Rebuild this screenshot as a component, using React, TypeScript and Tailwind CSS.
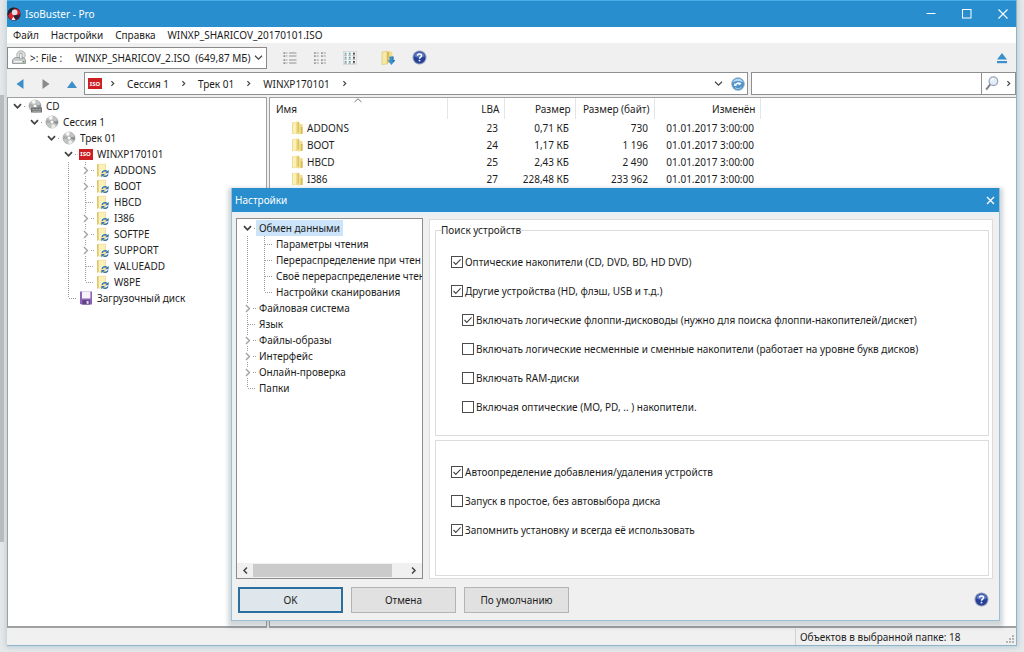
import React, { useState } from 'react';
import clsx from 'clsx';

type Guide = 'blank' | 'line' | 'tee' | 'end' | 'open' | 'closed';
type TreeIcon = 'drive' | 'disc' | 'iso' | 'folder' | 'floppy';

interface TreeRow {
  label: string;
  guides: Guide[];
  icon?: TreeIcon;
}

interface FileRow {
  name: string;
  lba: string;
  size: string;
  bytes: string;
  modified: string;
}

interface Option {
  id: string;
  label: string;
  nested?: boolean;
}

const discTree: TreeRow[] = [
  { label: 'CD', guides: ['open'], icon: 'drive' },
  { label: 'Сессия 1', guides: ['blank', 'open'], icon: 'disc' },
  { label: 'Трек 01', guides: ['blank', 'blank', 'open'], icon: 'disc' },
  { label: 'WINXP170101', guides: ['blank', 'blank', 'blank', 'open'], icon: 'iso' },
  { label: 'ADDONS', guides: ['blank', 'blank', 'blank', 'line', 'closed'], icon: 'folder' },
  { label: 'BOOT', guides: ['blank', 'blank', 'blank', 'line', 'closed'], icon: 'folder' },
  { label: 'HBCD', guides: ['blank', 'blank', 'blank', 'line', 'tee'], icon: 'folder' },
  { label: 'I386', guides: ['blank', 'blank', 'blank', 'line', 'closed'], icon: 'folder' },
  { label: 'SOFTPE', guides: ['blank', 'blank', 'blank', 'line', 'closed'], icon: 'folder' },
  { label: 'SUPPORT', guides: ['blank', 'blank', 'blank', 'line', 'closed'], icon: 'folder' },
  { label: 'VALUEADD', guides: ['blank', 'blank', 'blank', 'line', 'tee'], icon: 'folder' },
  { label: 'W8PE', guides: ['blank', 'blank', 'blank', 'line', 'end'], icon: 'folder' },
  { label: 'Загрузочный диск', guides: ['blank', 'blank', 'blank', 'end'], icon: 'floppy' },
];

const settingsTree: TreeRow[] = [
  { label: 'Обмен данными', guides: ['open'] },
  { label: 'Параметры чтения', guides: ['line', 'tee'] },
  { label: 'Перераспределение при чтен', guides: ['line', 'tee'] },
  { label: 'Своё перераспределение чтен', guides: ['line', 'tee'] },
  { label: 'Настройки сканирования', guides: ['line', 'end'] },
  { label: 'Файловая система', guides: ['closed'] },
  { label: 'Язык', guides: ['tee'] },
  { label: 'Файлы-образы', guides: ['closed'] },
  { label: 'Интерфейс', guides: ['closed'] },
  { label: 'Онлайн-проверка', guides: ['closed'] },
  { label: 'Папки', guides: ['end'] },
];

const files: FileRow[] = [
  { name: 'ADDONS', lba: '23', size: '0,71 КБ', bytes: '730', modified: '01.01.2017 3:00:00' },
  { name: 'BOOT', lba: '24', size: '1,17 КБ', bytes: '1 196', modified: '01.01.2017 3:00:00' },
  { name: 'HBCD', lba: '25', size: '2,43 КБ', bytes: '2 490', modified: '01.01.2017 3:00:00' },
  { name: 'I386', lba: '27', size: '228,48 КБ', bytes: '233 962', modified: '01.01.2017 3:00:00' },
];

const deviceOptions: Option[] = [
  { id: 'optical', label: 'Оптические накопители (CD, DVD, BD, HD DVD)' },
  { id: 'other', label: 'Другие устройства (HD, флэш, USB и т.д.)' },
  { id: 'floppy', label: 'Включать логические флоппи-дисководы (нужно для поиска флоппи-накопителей/дискет)', nested: true },
  { id: 'logical', label: 'Включать логические несменные и сменные накопители (работает на уровне букв дисков)', nested: true },
  { id: 'ram', label: 'Включать RAM-диски', nested: true },
  { id: 'mo', label: 'Включая оптические (MO, PD, .. ) накопители.', nested: true },
];

const startOptions: Option[] = [
  { id: 'autodetect', label: 'Автоопределение добавления/удаления устройств' },
  { id: 'idle', label: 'Запуск в простое, без автовыбора диска' },
  { id: 'remember', label: 'Запомнить установку и всегда её использовать' },
];

/* ---------- icons ---------- */

const AppIcon = () => (
  <svg width="14" height="14" viewBox="0 0 14 14">
    <circle cx="7" cy="7" r="6.6" fill="#5a1520" />
    <path d="M1 9C0 4 3 0.5 7 0.6L6 5Z" fill="#1d2430" />
    <path d="M1.2 8.5C2.5 5.5 4.5 4.5 7 5L6.2 12.6C3.5 12.6 1.6 11 1.2 8.5Z" fill="#d9252c" />
    <path d="M7 2.4C10 1.2 13 3.5 13.3 6.6L10 9Z" fill="#e2222b" />
    <circle cx="7.6" cy="5.4" r="2.8" fill="#dfe0e8" />
    <path d="M7.6 8.2H11.6L10.6 11.8L8 11Z" fill="#20263a" />
    <path d="M4.4 13L6.4 9.4L8.6 13Z" fill="#f3f3f3" />
  </svg>
);

const DriveIcon = () => (
  <svg width="16" height="16" viewBox="0 0 16 16">
    <circle cx="10" cy="5" r="4.2" fill="#e2e4e4" stroke="#a3a7a8" strokeWidth="0.9" />
    <path d="M1.5 9.8L4 7.6H12.6L14.5 9.8V13.5H1.5Z" fill="#c9cbcb" stroke="#8a8d8e" strokeWidth="0.8" />
    <rect x="8.8" y="3.2" width="2.2" height="5.6" fill="#fff" stroke="#8a8d8e" strokeWidth="0.7" />
    <path d="M3 11.7H11" stroke="#f6f6f6" strokeWidth="1.3" />
    <rect x="11.8" y="11" width="1.6" height="1.4" fill="#5b9a61" />
  </svg>
);

const DiscIcon = ({ drive }: { drive?: boolean }) => (
  <svg width="14" height="14" viewBox="0 0 14 14">
    <circle cx="7" cy="7" r="6" fill="#c3c5c5" stroke="#9c9f9f" strokeWidth="0.7" />
    <path d="M7 7L3.2 2.3A6 6 0 0 1 7.6 1Z" fill="#f7f7f7" />
    <path d="M7 7L10.8 11.7A6 6 0 0 1 6.4 13Z" fill="#eee" />
    <path d="M7 7L12.9 5.6A6 6 0 0 1 12.4 9.6Z" fill="#8e9292" />
    <path d="M7 7L1.1 8.4A6 6 0 0 1 1.6 4.4Z" fill="#a9acac" />
    <circle cx="7" cy="7" r="2.1" fill="#e5e6e6" stroke="#888" strokeWidth="0.5" />
    <circle cx="7" cy="7" r="0.9" fill="#fff" />
    {drive && (
      <>
        <rect x="3" y="8.5" width="11" height="5" fill="#6d6f6f" />
        <path d="M4.5 10.4H6.6M7.6 10.4H9.6M10.6 10.4H12.8M4.5 12.2H12.8" stroke="#c4c4c4" strokeWidth="0.8" />
      </>
    )}
  </svg>
);

const IsoIcon = () => (
  <span className="flex h-[11px] w-[14px] items-center justify-center bg-[#cc1f24] text-[6px] leading-none font-bold text-white">
    ISO
  </span>
);

const SyncFolderIcon = () => (
  <svg width="15" height="15" viewBox="0 0 15 15">
    <path d="M2 1.6L3.4 0.8H11V13.4H2Z" fill="#f3e19a" />
    <path d="M2 1.6L3.6 1V13L2 13.8Z" fill="#dfc565" />
    <path d="M3.8 1.6H9.8V7L5 12.6H3.8Z" fill="#faf0bd" />
    <path d="M7 9.9C7.6 7.9 10.2 7.2 11.8 8.4" stroke="#2b70b5" strokeWidth="1.4" fill="none" />
    <path d="M13.6 6.8V10.2H10.2Z" fill="#2b70b5" />
    <path d="M13 11.4C12.4 13.3 9.8 13.9 8.2 12.7" stroke="#2b70b5" strokeWidth="1.4" fill="none" />
    <path d="M6.4 14.3V10.9H9.8Z" fill="#2b70b5" />
  </svg>
);

const FloppyIcon = () => (
  <svg width="14" height="14" viewBox="0 0 14 14">
    <path d="M1 0.5H13V13.5H2.2L1 12.2Z" fill="#8c63b5" />
    <rect x="3" y="0.5" width="8.4" height="7" fill="#f6f3fa" />
    <rect x="3.4" y="9.2" width="7.4" height="4.3" fill="#5f4286" />
    <rect x="7.6" y="10" width="2" height="2.8" fill="#e6ddf1" />
  </svg>
);

const FolderIcon = () => (
  <svg width="13" height="14" viewBox="0 0 13 14">
    <path d="M1 1.2L7.6 0.6V12.8L1 13.2Z" fill="#f0dd8c" />
    <path d="M2 1.8L5 1.2V12.4L2 12.8Z" fill="#faf0bc" />
    <path d="M6.6 1.4L8.4 1V10.6L6.6 12.8Z" fill="#dcc25e" />
    <path d="M8.2 3.2L11.6 2.8V12.8L6.6 13.6L8.2 11.4Z" fill="#f0dc8c" />
    <path d="M9.8 6H11.6V12.8L9.8 13.1Z" fill="#d8bc57" />
  </svg>
);

const ExtractIcon = () => (
  <svg width="15" height="16" viewBox="0 0 15 16">
    <path d="M1 2L6 1V14L1 14.5Z" fill="#f7e9a6" stroke="#d9c167" strokeWidth="0.6" />
    <path d="M6 2L8.6 1.2V12L6 14Z" fill="#d8bb53" />
    <path d="M8.6 1.8H11.4V13H7Z" fill="#f0dc8c" />
    <path d="M8.4 6.5H12V10.2H14.3L10.4 15L6.6 10.2H8.4Z" fill="#3a8fd0" />
    <path d="M11.4 6.5H12.6V10.2H14.3L12 12.6Z" fill="#23699f" />
  </svg>
);

const HelpIcon = () => (
  <svg width="15" height="15" viewBox="0 0 15 15">
    <circle cx="7.5" cy="7.5" r="7" fill="#8f9ab8" />
    <circle cx="7.5" cy="7.5" r="5.9" fill="#263f97" />
    <path d="M2.2 6.2A5.5 5.5 0 0 1 12.8 6.2C10 8 5 8 2.2 6.2Z" fill="#5d7ccb" />
    <path d="M5.5 5.8C5.5 3.2 9.6 3.3 9.5 5.7C9.4 7.1 7.6 7.1 7.5 8.8" stroke="#fff" strokeWidth="1.5" fill="none" />
    <rect x="6.7" y="9.8" width="1.6" height="1.6" fill="#fff" />
  </svg>
);

const RefreshIcon = () => (
  <svg width="14" height="14" viewBox="0 0 14 14">
    <circle cx="7" cy="7" r="6.3" fill="#4e92c9" stroke="#8cabc4" strokeWidth="0.8" />
    <path d="M1.8 5.6A5.4 5.4 0 0 1 12.2 5.6C9 3.6 5 3.6 1.8 5.6Z" fill="#b5daf2" />
    <path d="M3.2 6V9H6.2L5.1 7.9C6.3 6.9 7.6 7.2 8.2 8.2L10.6 6.8C9.2 4.8 5.9 4.7 4.3 7Z" fill="#f3f9fd" />
    <path d="M4 10.6C6 12.2 9 12 10.4 10" stroke="#9fd4f0" strokeWidth="1" fill="none" />
  </svg>
);

const SearchIcon = () => (
  <svg width="14" height="15" viewBox="0 0 14 15">
    <circle cx="8.4" cy="5.2" r="4.3" fill="#e4edf6" stroke="#9aa6bf" strokeWidth="1.3" />
    <path d="M6.2 4.6A2.6 2.6 0 0 1 8.8 2.6" stroke="#fff" strokeWidth="1.1" fill="none" />
    <path d="M5.2 8.4L1.2 13.6" stroke="#7f7d88" strokeWidth="1.9" />
  </svg>
);

const Arrow = ({ dir }: { dir: 'left' | 'right' | 'up' }) => (
  <svg width="10" height="12" viewBox="0 0 10 12">
    {dir === 'left' && <path d="M8.5 1V11L1.5 6Z" fill="#3d8fcb" />}
    {dir === 'right' && <path d="M1.5 1V11L8.5 6Z" fill="#8b8b8b" />}
    {dir === 'up' && <path d="M0 10H10L5 3Z" fill="#3d8fcb" />}
  </svg>
);

const Chevron = ({ dir, className }: { dir: 'left' | 'right' | 'down'; className?: string }) => (
  <svg width="9" height="9" viewBox="0 0 9 9" fill="none" stroke="currentColor" className={className}>
    {dir === 'left' && <path d="M6 1.5L3 4.5L6 7.5" strokeWidth="1.5" />}
    {dir === 'right' && <path d="M3.4 2.2L5.7 4.5L3.4 6.8" strokeWidth="1.2" />}
    {dir === 'down' && <path d="M1 2.8L4.5 6.2L8 2.8" strokeWidth="1.2" />}
  </svg>
);

const ListViewIcon = ({ columns }: { columns: 1 | 2 | 3 }) => (
  <svg width="14" height="14" viewBox="0 0 14 14">
    {columns === 1 &&
      [2, 5, 9, 12].map((y) => (
        <g key={y} fill="#8f9296">
          <rect x="0.5" y={y - 0.8} width="1.8" height="1.8" />
          <rect x="3" y={y - 0.8} width="1.5" height="1.4" fill="#bbb" />
          <rect x="6" y={y - 0.5} width="7.5" height="1" />
        </g>
      ))}
    {columns === 2 &&
      [2, 5, 9, 12].map((y) => (
        <g key={y} fill="#9a9da1">
          <rect x="1" y={y - 0.8} width="1.8" height="1.8" />
          <rect x="3.6" y={y - 0.5} width="2.2" height="1" />
          <rect x="8" y={y - 0.8} width="1.8" height="1.8" />
          <rect x="10.6" y={y - 0.5} width="2.4" height="1" />
        </g>
      ))}
    {columns === 3 && (
      <>
        <rect x="0.5" y="0.5" width="13" height="13" fill="#f6f8f8" stroke="#c9cccc" strokeWidth="0.6" />
        {[2.5, 6.5, 10.7].map((y) =>
          [1.6, 5.8, 10].map((x) => (
            <g key={`${x}-${y}`}>
              <rect x={x} y={y - 0.8} width="1.9" height="1.9" fill={x > 9 ? '#444' : '#6fa3a8'} />
              <rect x={x - 0.6} y={y + 1.5} width="3" height="0.7" fill="#aaa" />
            </g>
          ))
        )}
      </>
    )}
  </svg>
);

const TreeIconView = ({ icon }: { icon: TreeIcon }) => {
  switch (icon) {
    case 'drive':
      return <DiscIcon drive />;
    case 'disc':
      return <DiscIcon />;
    case 'iso':
      return <IsoIcon />;
    case 'folder':
      return <SyncFolderIcon />;
    default:
      return <FloppyIcon />;
  }
};

/* ---------- tree ---------- */

const GuideCell = ({ kind }: { kind: Guide }) => (
  <svg width="17" height="16" viewBox="0 0 17 16" className="shrink-0" fill="none">
    <g stroke="#9a9a9a" strokeDasharray="1 1">
      {(kind === 'line' || kind === 'tee') && <path d="M8.5 0V16" />}
      {kind === 'end' && <path d="M8.5 0V8" />}
      {(kind === 'tee' || kind === 'end') && <path d="M9 8.5H17" />}
      {kind === 'closed' && <path d="M8.5 0V3M8.5 14V16M14 8.5H17" />}
      {kind === 'open' && <path d="M15 8.5H17" />}
    </g>
    {kind === 'open' && <path d="M5 6.2L8.5 9.8L12 6.2" stroke="#404040" strokeWidth="1.7" />}
    {kind === 'closed' && <path d="M7 5L10.4 8.5L7 12" stroke="#a3a3a3" strokeWidth="1.4" />}
  </svg>
);

const Tree = ({ rows, selected }: { rows: TreeRow[]; selected?: string }) => (
  <ul>
    {rows.map((row) => (
      <li key={row.label} className="flex h-4 items-center whitespace-nowrap">
        {row.guides.map((kind, i) => (
          <GuideCell key={i} kind={kind} />
        ))}
        {row.icon && (
          <span className="flex w-[17px] shrink-0 justify-center">
            <TreeIconView icon={row.icon} />
          </span>
        )}
        <span className={clsx('px-[3px] leading-4', row.label === selected && 'bg-[#cce4f9]')}>{row.label}</span>
      </li>
    ))}
  </ul>
);

/* ---------- main window ---------- */

const TitleBar = () => (
  <header className="flex h-[27px] items-center border-t border-[#4bb0ea] bg-[#288ecd] pr-[7px] text-white">
    <AppIcon />
    <h1 className="ml-1 flex-1">IsoBuster - Pro</h1>
    <div className="flex items-center gap-6">
      <button aria-label="Свернуть" className="flex size-3 items-center justify-center">
        <svg width="10" height="10" viewBox="0 0 10 10"><path d="M0.5 4.5H9.5" stroke="#fff" /></svg>
      </button>
      <button aria-label="Развернуть" className="flex size-3 items-center justify-center">
        <svg width="10" height="10" viewBox="0 0 10 10"><rect x="0.5" y="0.5" width="8.5" height="8.5" fill="none" stroke="#fff" /></svg>
      </button>
      <button aria-label="Закрыть" className="flex size-3 items-center justify-center">
        <svg width="10" height="10" viewBox="0 0 10 10"><path d="M0.5 0.5L9.5 9.5M9.5 0.5L0.5 9.5" stroke="#fff" strokeWidth="1.1" /></svg>
      </button>
    </div>
  </header>
);

const MenuBar = () => (
  <nav className="flex h-4 items-center gap-3 bg-white px-1.5">
    <button>Файл</button>
    <button>Настройки</button>
    <button>Справка</button>
    <button>WINXP_SHARICOV_20170101.ISO</button>
  </nav>
);

const Toolbar = () => (
  <div className="flex h-[29px] items-center pr-2">
    <div className="relative flex h-[22px] w-[260px] items-center border border-[#8a8a8a] bg-white pl-[3px]">
      <DriveIcon />
      <select aria-label="Устройство" className="ml-[3px] h-5 w-[222px] appearance-none overflow-hidden outline-none">
        <option>{'>: File :\u00a0\u00a0\u00a0\u00a0 WINXP_SHARICOV_2.ISO\u00a0 (649,87 МБ)'}</option>
      </select>
      <Chevron dir="down" className="pointer-events-none absolute right-[3px] text-[#444]" />
    </div>
    <div className="ml-4 flex items-center gap-4">
      <button aria-label="Таблица"><ListViewIcon columns={1} /></button>
      <button aria-label="Список"><ListViewIcon columns={2} /></button>
      <button aria-label="Значки"><ListViewIcon columns={3} /></button>
    </div>
    <div className="ml-6 flex items-center gap-4">
      <button aria-label="Извлечь файлы"><ExtractIcon /></button>
      <button aria-label="Помощь"><HelpIcon /></button>
    </div>
    <button aria-label="Извлечь диск" className="ml-auto">
      <svg width="12" height="12" viewBox="0 0 12 12" fill="#3d8fcb">
        <path d="M1 7.6H11L6 1Z" />
        <rect x="1" y="9" width="10" height="2.2" />
      </svg>
    </button>
  </div>
);

const Crumb = ({ children }: { children: React.ReactNode }) => (
  <>
    <button>{children}</button>
    <Chevron dir="right" className="text-[#444]" />
  </>
);

const AddressBar = () => (
  <div className="flex h-[23px]">
    <div className="flex w-[77px] items-center gap-4 pl-2">
      <button aria-label="Назад"><Arrow dir="left" /></button>
      <button aria-label="Вперёд"><Arrow dir="right" /></button>
      <button aria-label="Вверх"><Arrow dir="up" /></button>
    </div>
    <div className="flex flex-1 items-center gap-2.5 border border-[#8f8f8f] bg-white pr-0.5 pl-[3px]">
      <div className="flex items-center gap-1.5">
        <IsoIcon />
        <Chevron dir="right" className="text-[#444]" />
      </div>
      <Crumb>Сессия 1</Crumb>
      <Crumb>Трек 01</Crumb>
      <Crumb>WINXP170101</Crumb>
      <div className="ml-auto flex items-center gap-2">
        <button aria-label="История"><Chevron dir="down" className="text-[#444]" /></button>
        <button aria-label="Обновить"><RefreshIcon /></button>
      </div>
    </div>
    <div className="ml-[3px] flex w-[265px] border border-[#8f8f8f] bg-white">
      <input type="text" aria-label="Поиск" className="min-w-0 flex-1 px-1 outline-none" />
      <button aria-label="Найти" className="flex w-[34px] items-center justify-between border-l border-[#8f8f8f] pr-0.5 pl-[3px]">
        <SearchIcon />
        <Chevron dir="right" className="text-[#444]" />
      </button>
    </div>
  </div>
);

const headCell = 'h-[21px] border-r border-[#e2e6ea] pr-1 font-normal';

const FileTable = () => (
  <table className="w-[490px] table-fixed border-collapse text-right whitespace-nowrap">
    <colgroup>
      <col className="w-[177px]" />
      <col className="w-[57px]" />
      <col className="w-[71px]" />
      <col className="w-[79px]" />
      <col className="w-[106px]" />
    </colgroup>
    <thead>
      <tr>
        <th className={clsx(headCell, 'relative pl-1.5 text-left')}>
          Имя
          <svg width="8" height="5" viewBox="0 0 8 5" className="absolute top-0 left-1/2 -ml-1" fill="none">
            <path d="M0.5 4L4 0.8L7.5 4" stroke="#777" />
          </svg>
        </th>
        <th className={headCell}>LBA</th>
        <th className={headCell}>Размер</th>
        <th className={headCell}>Размер (байт)</th>
        <th className={headCell}>Изменён</th>
      </tr>
    </thead>
    <tbody>
      {files.map((file) => (
        <tr key={file.name} className="h-[17px]">
          <td className="pl-[21px] text-left">
            <span className="flex items-center gap-[3px]">
              <FolderIcon />
              {file.name}
            </span>
          </td>
          <td className="pr-1.5">{file.lba}</td>
          <td className="pr-1.5">{file.size}</td>
          <td className="pr-1.5">{file.bytes}</td>
          <td className="pr-1.5">{file.modified}</td>
        </tr>
      ))}
    </tbody>
  </table>
);

/* ---------- settings dialog ---------- */

interface CheckProps {
  option: Option;
  checked: boolean;
  onToggle: (id: string) => void;
}

const Check = ({ option, checked, onToggle }: CheckProps) => (
  <label className={clsx('flex h-[29px] items-center gap-0.5 whitespace-nowrap', option.nested && 'pl-[11px]')}>
    <span className="relative flex size-[12px]">
      <input
        type="checkbox"
        checked={checked}
        onChange={() => onToggle(option.id)}
        className="size-[12px] appearance-none border border-[#4c4c4c] bg-white"
      />
      {checked && (
        <svg width="12" height="12" viewBox="0 0 12 12" className="pointer-events-none absolute inset-0" fill="none">
          <path d="M2.5 6L4.8 8.4L9.6 3.4" stroke="#444" strokeWidth="1.1" />
        </svg>
      )}
    </span>
    {option.label}
  </label>
);

const dialogButton = 'h-[26px] w-[105px]';

const SettingsDialog = () => {
  const [checked, setChecked] = useState<Record<string, boolean>>({
    optical: true,
    other: true,
    floppy: true,
    autodetect: true,
    remember: true,
  });

  const toggle = (id: string) => setChecked((prev) => ({ ...prev, [id]: !prev[id] }));

  return (
    <section
      role="dialog"
      aria-label="Настройки"
      className="absolute top-[188px] right-6 bottom-[31px] left-[231px] flex flex-col border border-t-0 border-[#9cbfd3] bg-[#f0f0f0] shadow-[0_3px_4px_3px_rgba(90,110,120,0.28)]"
    >
      <header className="flex h-6 items-center justify-between bg-[#288ecd] pr-1 pl-[3px] text-white">
        <h2>Настройки</h2>
        <button aria-label="Закрыть">
          <svg width="9" height="9" viewBox="0 0 9 9"><path d="M1 1L8 8M8 1L1 8" stroke="#fff" strokeWidth="1.3" /></svg>
        </button>
      </header>
      <div className="flex min-h-0 flex-1 gap-1.5 border-x border-t-[3px] border-[#e8f1f6] pt-[3px] pr-[5px] pl-[3px]">
        <div className="flex w-[187px] shrink-0 flex-col border border-[#8c8c8c] bg-white">
          <div className="flex-1 overflow-hidden pt-px pl-0.5">
            <Tree rows={settingsTree} selected="Обмен данными" />
          </div>
          <div className="flex h-[15px] items-center bg-[#f0f0f0]">
            <button aria-label="Влево" className="flex w-4 justify-center"><Chevron dir="left" className="text-[#444]" /></button>
            <div className="flex flex-1">
              <div className="h-[13px] w-[139px] bg-[#cbcbcb]" />
            </div>
            <button aria-label="Вправо" className="flex w-4 rotate-180 justify-center"><Chevron dir="left" className="text-[#444]" /></button>
          </div>
        </div>
        <div className="mt-px flex min-w-0 flex-1 flex-col gap-1 border border-[#dcdcdc] bg-white py-0.5 pr-[3px] pl-[5px]">
          <fieldset className="min-w-0 border border-[#dcdcdc] pb-[14px] pl-[15px]">
            <legend className="-ml-[10px] leading-4">Поиск устройств</legend>
            <div className="pt-[9px]">
              {deviceOptions.map((option) => (
                <Check key={option.id} option={option} checked={!!checked[option.id]} onToggle={toggle} />
              ))}
            </div>
          </fieldset>
          <fieldset className="min-w-0 flex-1 border border-[#dcdcdc] pt-4 pl-[15px]">
            {startOptions.map((option) => (
              <Check key={option.id} option={option} checked={!!checked[option.id]} onToggle={toggle} />
            ))}
          </fieldset>
        </div>
      </div>
      <footer className="flex h-[41px] shrink-0 items-center gap-2 border-x border-[#e8f1f6] px-[5px]">
        <button className={clsx(dialogButton, 'border-2 border-[#2a6f9e] bg-[#dfe7ec]')}>OK</button>
        <button className={clsx(dialogButton, 'border border-[#b4b4b4] bg-[#e1e1e1]')}>Отмена</button>
        <button className={clsx(dialogButton, 'border border-[#b4b4b4] bg-[#e1e1e1]')}>По умолчанию</button>
        <button aria-label="Помощь" className="mr-1 ml-auto"><HelpIcon /></button>
      </footer>
    </section>
  );
};

const App = () => (
  <div className="relative flex min-h-screen flex-col bg-[#e6e8e9] px-[7px] pb-1.5 font-['Noto_Sans','Open_Sans',sans-serif] text-[10px] leading-4 text-[#1c1c1c]">
    {/* edge of the window behind */}
    <div className="absolute top-[95px] bottom-[110px] left-0 w-1 bg-[#b9bcbd]" />
    <div className="flex flex-1 flex-col border-r border-b border-[#8fb3c9] bg-[#f0f0f0] shadow-[0_0_5px_1px_rgba(110,160,190,0.4)]">
      <TitleBar />
      <MenuBar />
      <Toolbar />
      <AddressBar />
      <main className="mt-0.5 flex flex-1 gap-0.5">
        <aside className="w-[260px] border border-b-2 border-[#a0a0a0] bg-white pl-px">
          <Tree rows={discTree} />
        </aside>
        <div className="flex-1 border border-r-0 border-b-2 border-[#a0a0a0] bg-white">
          <FileTable />
        </div>
      </main>
      <footer className="flex h-[17px] items-center justify-end">
        <span className="w-[211px] border-l border-[#d0d0d0] pl-1">Объектов в выбранной папке: 18</span>
        <svg width="9" height="9" viewBox="0 0 9 9" fill="#b5b5b5" className="mt-1.5 mr-px">
          <path d="M6 0H8V2H6ZM6 3H8V5H6ZM3 3H5V5H3ZM6 6H8V8H6ZM3 6H5V8H3ZM0 6H2V8H0Z" />
        </svg>
      </footer>
    </div>
    <SettingsDialog />
  </div>
);

export default App;
